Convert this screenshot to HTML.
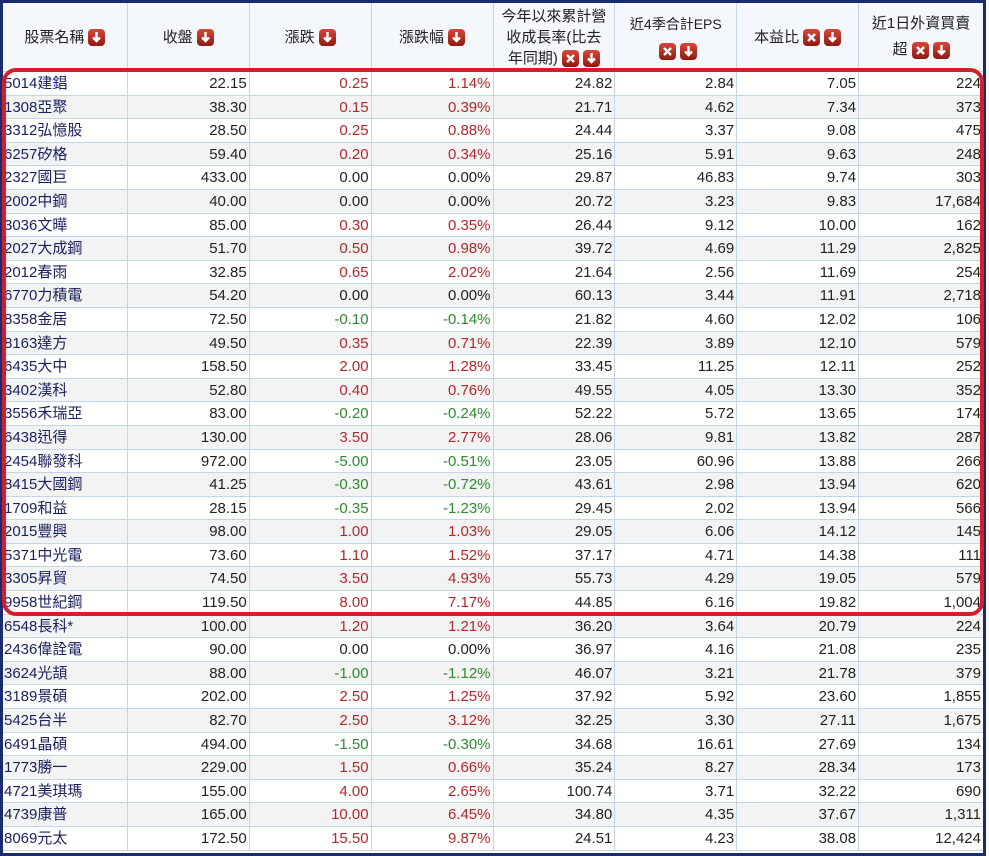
<!DOCTYPE html>
<html><head><meta charset="utf-8"><style>
body{margin:0;background:#fff;width:989px;height:855px;overflow:hidden;position:relative;font-family:"Liberation Sans","Noto Sans CJK TC",sans-serif;}
#t{position:absolute;left:0;top:0;width:980px;height:850px;border:3px solid #1c2a6e;background:#fff;}
.hd{display:flex;height:68px;border-bottom:1px solid #c5d5e8;background:#f4f7fc;}
.hd>div{box-sizing:border-box;border-right:1px solid #c5d5e8;display:flex;align-items:center;justify-content:center;text-align:center;font-size:15px;color:#222;line-height:21px;}
.hd>div>p{margin:0;}
.r{display:flex;height:23.6px;box-sizing:border-box;border-bottom:1px solid #c5d5e8;}
.r:nth-child(even){background:#f3f3f3;}
.r div{box-sizing:border-box;border-right:1px solid #c5d5e8;font-size:15px;line-height:23px;text-align:right;padding-right:2px;color:#222;white-space:nowrap;overflow:hidden;}
.r div:first-child{text-align:left;padding-left:1px;color:#1a1f5e;}
.w0{width:125px}.w1{width:122px}.w7{width:124px;border-right:none!important}
.u{color:#b3282d!important}.d{color:#2f8a2f!important}
.ic{display:inline-block;width:17px;height:17px;border-radius:4px;background:linear-gradient(#d8473a,#8e1a12);vertical-align:middle;position:relative;margin-left:4px;}
.ic svg{position:absolute;left:0;top:0}
#box{position:absolute;left:2px;top:68px;width:974px;height:540px;border:4px solid #d21f2d;border-radius:14px;}
</style></head><body>
<div id="t">
<div class="hd">
<div class="w0"><p>股票名稱<span class="ic"><svg width="17" height="17"><path d="M8.5 3v8.5M5 8.5L8.5 12 12 8.5" stroke="#fff" stroke-width="2.4" fill="none"/></svg></span></p></div>
<div class="w1"><p>收盤<span class="ic"><svg width="17" height="17"><path d="M8.5 3v8.5M5 8.5L8.5 12 12 8.5" stroke="#fff" stroke-width="2.4" fill="none"/></svg></span></p></div>
<div class="w1"><p>漲跌<span class="ic"><svg width="17" height="17"><path d="M8.5 3v8.5M5 8.5L8.5 12 12 8.5" stroke="#fff" stroke-width="2.4" fill="none"/></svg></span></p></div>
<div class="w1"><p>漲跌幅<span class="ic"><svg width="17" height="17"><path d="M8.5 3v8.5M5 8.5L8.5 12 12 8.5" stroke="#fff" stroke-width="2.4" fill="none"/></svg></span></p></div>
<div class="w1" style="font-size:15px;line-height:21px"><p style="white-space:nowrap">今年以來累計營<br>收成長率(比去<br>年同期)<span class="ic"><svg width="17" height="17"><path d="M5 5l7 7M12 5l-7 7" stroke="#fff" stroke-width="2.4"/></svg></span><span class="ic"><svg width="17" height="17"><path d="M8.5 3v8.5M5 8.5L8.5 12 12 8.5" stroke="#fff" stroke-width="2.4" fill="none"/></svg></span></p></div>
<div class="w1" style="font-size:14px;line-height:26px"><p style="white-space:nowrap">近4季合計EPS<br><span class="ic"><svg width="17" height="17"><path d="M5 5l7 7M12 5l-7 7" stroke="#fff" stroke-width="2.4"/></svg></span><span class="ic"><svg width="17" height="17"><path d="M8.5 3v8.5M5 8.5L8.5 12 12 8.5" stroke="#fff" stroke-width="2.4" fill="none"/></svg></span></p></div>
<div class="w1"><p>本益比<span class="ic"><svg width="17" height="17"><path d="M5 5l7 7M12 5l-7 7" stroke="#fff" stroke-width="2.4"/></svg></span><span class="ic"><svg width="17" height="17"><path d="M8.5 3v8.5M5 8.5L8.5 12 12 8.5" stroke="#fff" stroke-width="2.4" fill="none"/></svg></span></p></div>
<div class="w7" style="line-height:26px"><p style="white-space:nowrap">近1日外資買賣<br>超<span class="ic"><svg width="17" height="17"><path d="M5 5l7 7M12 5l-7 7" stroke="#fff" stroke-width="2.4"/></svg></span><span class="ic"><svg width="17" height="17"><path d="M8.5 3v8.5M5 8.5L8.5 12 12 8.5" stroke="#fff" stroke-width="2.4" fill="none"/></svg></span></p></div>
</div>
<div id="rows">
<div class="r"><div class="w0">5014建錩</div><div class="w1">22.15</div><div class="w1 u">0.25</div><div class="w1 u">1.14%</div><div class="w1">24.82</div><div class="w1">2.84</div><div class="w1">7.05</div><div class="w7">224</div></div>
<div class="r"><div class="w0">1308亞聚</div><div class="w1">38.30</div><div class="w1 u">0.15</div><div class="w1 u">0.39%</div><div class="w1">21.71</div><div class="w1">4.62</div><div class="w1">7.34</div><div class="w7">373</div></div>
<div class="r"><div class="w0">3312弘憶股</div><div class="w1">28.50</div><div class="w1 u">0.25</div><div class="w1 u">0.88%</div><div class="w1">24.44</div><div class="w1">3.37</div><div class="w1">9.08</div><div class="w7">475</div></div>
<div class="r"><div class="w0">6257矽格</div><div class="w1">59.40</div><div class="w1 u">0.20</div><div class="w1 u">0.34%</div><div class="w1">25.16</div><div class="w1">5.91</div><div class="w1">9.63</div><div class="w7">248</div></div>
<div class="r"><div class="w0">2327國巨</div><div class="w1">433.00</div><div class="w1">0.00</div><div class="w1">0.00%</div><div class="w1">29.87</div><div class="w1">46.83</div><div class="w1">9.74</div><div class="w7">303</div></div>
<div class="r"><div class="w0">2002中鋼</div><div class="w1">40.00</div><div class="w1">0.00</div><div class="w1">0.00%</div><div class="w1">20.72</div><div class="w1">3.23</div><div class="w1">9.83</div><div class="w7">17,684</div></div>
<div class="r"><div class="w0">3036文曄</div><div class="w1">85.00</div><div class="w1 u">0.30</div><div class="w1 u">0.35%</div><div class="w1">26.44</div><div class="w1">9.12</div><div class="w1">10.00</div><div class="w7">162</div></div>
<div class="r"><div class="w0">2027大成鋼</div><div class="w1">51.70</div><div class="w1 u">0.50</div><div class="w1 u">0.98%</div><div class="w1">39.72</div><div class="w1">4.69</div><div class="w1">11.29</div><div class="w7">2,825</div></div>
<div class="r"><div class="w0">2012春雨</div><div class="w1">32.85</div><div class="w1 u">0.65</div><div class="w1 u">2.02%</div><div class="w1">21.64</div><div class="w1">2.56</div><div class="w1">11.69</div><div class="w7">254</div></div>
<div class="r"><div class="w0">6770力積電</div><div class="w1">54.20</div><div class="w1">0.00</div><div class="w1">0.00%</div><div class="w1">60.13</div><div class="w1">3.44</div><div class="w1">11.91</div><div class="w7">2,718</div></div>
<div class="r"><div class="w0">8358金居</div><div class="w1">72.50</div><div class="w1 d">-0.10</div><div class="w1 d">-0.14%</div><div class="w1">21.82</div><div class="w1">4.60</div><div class="w1">12.02</div><div class="w7">106</div></div>
<div class="r"><div class="w0">8163達方</div><div class="w1">49.50</div><div class="w1 u">0.35</div><div class="w1 u">0.71%</div><div class="w1">22.39</div><div class="w1">3.89</div><div class="w1">12.10</div><div class="w7">579</div></div>
<div class="r"><div class="w0">6435大中</div><div class="w1">158.50</div><div class="w1 u">2.00</div><div class="w1 u">1.28%</div><div class="w1">33.45</div><div class="w1">11.25</div><div class="w1">12.11</div><div class="w7">252</div></div>
<div class="r"><div class="w0">3402漢科</div><div class="w1">52.80</div><div class="w1 u">0.40</div><div class="w1 u">0.76%</div><div class="w1">49.55</div><div class="w1">4.05</div><div class="w1">13.30</div><div class="w7">352</div></div>
<div class="r"><div class="w0">3556禾瑞亞</div><div class="w1">83.00</div><div class="w1 d">-0.20</div><div class="w1 d">-0.24%</div><div class="w1">52.22</div><div class="w1">5.72</div><div class="w1">13.65</div><div class="w7">174</div></div>
<div class="r"><div class="w0">6438迅得</div><div class="w1">130.00</div><div class="w1 u">3.50</div><div class="w1 u">2.77%</div><div class="w1">28.06</div><div class="w1">9.81</div><div class="w1">13.82</div><div class="w7">287</div></div>
<div class="r"><div class="w0">2454聯發科</div><div class="w1">972.00</div><div class="w1 d">-5.00</div><div class="w1 d">-0.51%</div><div class="w1">23.05</div><div class="w1">60.96</div><div class="w1">13.88</div><div class="w7">266</div></div>
<div class="r"><div class="w0">8415大國鋼</div><div class="w1">41.25</div><div class="w1 d">-0.30</div><div class="w1 d">-0.72%</div><div class="w1">43.61</div><div class="w1">2.98</div><div class="w1">13.94</div><div class="w7">620</div></div>
<div class="r"><div class="w0">1709和益</div><div class="w1">28.15</div><div class="w1 d">-0.35</div><div class="w1 d">-1.23%</div><div class="w1">29.45</div><div class="w1">2.02</div><div class="w1">13.94</div><div class="w7">566</div></div>
<div class="r"><div class="w0">2015豐興</div><div class="w1">98.00</div><div class="w1 u">1.00</div><div class="w1 u">1.03%</div><div class="w1">29.05</div><div class="w1">6.06</div><div class="w1">14.12</div><div class="w7">145</div></div>
<div class="r"><div class="w0">5371中光電</div><div class="w1">73.60</div><div class="w1 u">1.10</div><div class="w1 u">1.52%</div><div class="w1">37.17</div><div class="w1">4.71</div><div class="w1">14.38</div><div class="w7">111</div></div>
<div class="r"><div class="w0">3305昇貿</div><div class="w1">74.50</div><div class="w1 u">3.50</div><div class="w1 u">4.93%</div><div class="w1">55.73</div><div class="w1">4.29</div><div class="w1">19.05</div><div class="w7">579</div></div>
<div class="r"><div class="w0">9958世紀鋼</div><div class="w1">119.50</div><div class="w1 u">8.00</div><div class="w1 u">7.17%</div><div class="w1">44.85</div><div class="w1">6.16</div><div class="w1">19.82</div><div class="w7">1,004</div></div>
<div class="r"><div class="w0">6548長科*</div><div class="w1">100.00</div><div class="w1 u">1.20</div><div class="w1 u">1.21%</div><div class="w1">36.20</div><div class="w1">3.64</div><div class="w1">20.79</div><div class="w7">224</div></div>
<div class="r"><div class="w0">2436偉詮電</div><div class="w1">90.00</div><div class="w1">0.00</div><div class="w1">0.00%</div><div class="w1">36.97</div><div class="w1">4.16</div><div class="w1">21.08</div><div class="w7">235</div></div>
<div class="r"><div class="w0">3624光頡</div><div class="w1">88.00</div><div class="w1 d">-1.00</div><div class="w1 d">-1.12%</div><div class="w1">46.07</div><div class="w1">3.21</div><div class="w1">21.78</div><div class="w7">379</div></div>
<div class="r"><div class="w0">3189景碩</div><div class="w1">202.00</div><div class="w1 u">2.50</div><div class="w1 u">1.25%</div><div class="w1">37.92</div><div class="w1">5.92</div><div class="w1">23.60</div><div class="w7">1,855</div></div>
<div class="r"><div class="w0">5425台半</div><div class="w1">82.70</div><div class="w1 u">2.50</div><div class="w1 u">3.12%</div><div class="w1">32.25</div><div class="w1">3.30</div><div class="w1">27.11</div><div class="w7">1,675</div></div>
<div class="r"><div class="w0">6491晶碩</div><div class="w1">494.00</div><div class="w1 d">-1.50</div><div class="w1 d">-0.30%</div><div class="w1">34.68</div><div class="w1">16.61</div><div class="w1">27.69</div><div class="w7">134</div></div>
<div class="r"><div class="w0">1773勝一</div><div class="w1">229.00</div><div class="w1 u">1.50</div><div class="w1 u">0.66%</div><div class="w1">35.24</div><div class="w1">8.27</div><div class="w1">28.34</div><div class="w7">173</div></div>
<div class="r"><div class="w0">4721美琪瑪</div><div class="w1">155.00</div><div class="w1 u">4.00</div><div class="w1 u">2.65%</div><div class="w1">100.74</div><div class="w1">3.71</div><div class="w1">32.22</div><div class="w7">690</div></div>
<div class="r"><div class="w0">4739康普</div><div class="w1">165.00</div><div class="w1 u">10.00</div><div class="w1 u">6.45%</div><div class="w1">34.80</div><div class="w1">4.35</div><div class="w1">37.67</div><div class="w7">1,311</div></div>
<div class="r"><div class="w0">8069元太</div><div class="w1">172.50</div><div class="w1 u">15.50</div><div class="w1 u">9.87%</div><div class="w1">24.51</div><div class="w1">4.23</div><div class="w1">38.08</div><div class="w7">12,424</div></div>
</div>
</div>
<div id="box"></div>
</body></html>
